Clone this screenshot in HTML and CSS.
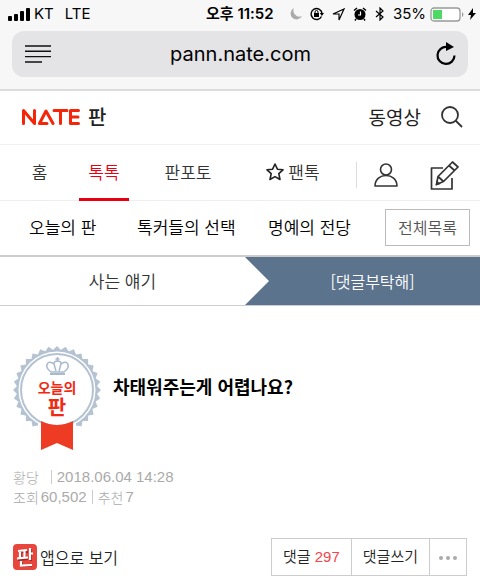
FILE: index.html
```html
<!DOCTYPE html>
<html lang="ko">
<head>
    <meta charset="UTF-8">
    <meta name="viewport" content="width=device-width, initial-scale=1">
    <title>네이트 판</title>
    <link rel="stylesheet" href="styles.css">
</head>
<body>
    <div class="browser">
        <div class="status">
            <div class="carrier">
                <svg width="22" height="13" viewBox="0 0 22 13"><rect x="0" y="8" width="4" height="5" rx="1"/><rect x="6" y="6" width="4" height="7" rx="1"/><rect x="12" y="3" width="4" height="10" rx="1"/><rect x="18" y="0" width="4" height="13" rx="1"/></svg>
                <span>KT</span>
                <span class="lte">LTE</span>
            </div>
            <div class="clock">오후 11:52</div>
            <div class="indicators">
                <svg width="12" height="12" viewBox="0 0 12 12"><path fill="#aaa" d="M4 0A6 6 0 1 0 12 8A6 6 0 0 1 4 0Z"/></svg>
                <svg width="14" height="14" viewBox="0 0 14 14"><path d="M11.5 9.5A5.5 5.5 0 1 1 12 6" fill="none" stroke="#000" stroke-width="1.4"/><path d="M9.8 6h4.2l-2.1 3zM4 6h5v4H4z"/><path d="M5 6V5a1.5 1.5 0 0 1 3 0v1" fill="none" stroke="#000"/></svg>
                <svg width="13" height="13" viewBox="0 0 13 13"><path d="M1 6L12 1L7 12V6Z" fill="none" stroke="#000" stroke-width="1.2"/></svg>
                <svg width="14" height="14" viewBox="0 0 14 14"><circle cx="7" cy="7.5" r="5.5"/><path d="M1 3.5L4 1M13 3.5L10 1M3 12l-1 1.5M11 12l1 1.5" stroke="#000" stroke-width="1.5"/><path d="M7.500 4.500v3.500H5" fill="none" stroke="#fff" stroke-width="1.200"/></svg>
                <svg width="10" height="14" viewBox="0 0 10 14"><path d="M1 4l7 6-3 3V1l3 3-7 6" fill="none" stroke="#000" stroke-width="1.2"/></svg>
                <span>35%</span>
                <svg class="battery" width="34" height="15" viewBox="0 0 34 15"><rect x="1" y="1" width="29" height="13" rx="3" fill="#fff" stroke="#999" stroke-width="1.3"/><rect x="3" y="3" width="9" height="9" fill="#4cd964"/><path d="M32 5a3 3 0 0 1 0 5z" fill="#999"/></svg>
                <svg width="8" height="12" viewBox="0 0 8 12"><path d="M5 0L0 7h3L2 12l6-7H5z"/></svg>
            </div>
        </div>
        <div class="address">
            <button class="icon-btn" aria-label="읽기 도구">
                <svg width="26" height="18" viewBox="0 0 26 18"><path d="M0 1h26M0 6.300h26M0 11.600h26M0 17h17" stroke="#111" stroke-width="1.4"/></svg>
            </button>
            <span class="host">pann.nate.com</span>
            <button class="icon-btn" aria-label="새로고침">
                <svg width="20" height="24" viewBox="0 0 20 24"><path d="M11 5A8.500 8.500 0 1 0 18.500 13.500" fill="none" stroke="#000" stroke-width="2.200"/><path d="M10 0v9l8-4z"/></svg>
            </button>
        </div>
    </div>

    <header class="top">
        <a href="#" class="logo" aria-label="NATE 판">
            <svg width="58" height="16" viewBox="0 0 58 16"><g fill="none" stroke="#f5250a" stroke-width="3" stroke-linecap="round" stroke-linejoin="round"><path d="M1.500 14.500V1.500L12.500 14.500V1.500"/><path d="M31 14.500L24 2L17.500 14.500H25"/><path d="M32 1.500H45M38.500 1.500V14.500"/><path d="M56.500 1.500H48.500V14.500H56.500M48.500 8H56"/></g></svg>
            <span>판</span>
        </a>
        <a href="#" class="video">동영상</a>
        <button class="icon-btn" aria-label="검색">
            <svg width="22" height="22" viewBox="0 0 22 22"><g fill="none" stroke="#333" stroke-width="1.800"><circle cx="9" cy="9" r="8"/><path d="M14.500 14.500L21 21"/></g></svg>
        </button>
    </header>

    <nav class="tabs">
        <a href="#">홈</a>
        <a href="#" class="on">톡톡</a>
        <a href="#">판포토</a>
        <a href="#">
            <svg width="18" height="18" viewBox="0 0 18 18"><path d="M9 1l2.400 5.200 5.600.6-4.200 3.800 1.200 5.900L9 13.600l-5 2.900 1.200-5.900L1 6.800l5.600-.6z" fill="none" stroke="#222" stroke-width="1.600" stroke-linejoin="round"/></svg>
            팬톡
        </a>
        <div class="tools">
            <button class="icon-btn" aria-label="내 정보">
                <svg width="24" height="24" viewBox="0 0 24 24"><g fill="none" stroke="#333" stroke-width="1.600" stroke-linejoin="round"><circle cx="12" cy="6.500" r="5.500"/><path d="M1 23c0-14 22-14 22 0z"/></g></svg>
            </button>
            <button class="icon-btn" aria-label="글쓰기">
                <svg width="29" height="29" viewBox="0 0 29 29"><g fill="none" stroke="#333" stroke-width="1.700" stroke-linejoin="round"><path d="M13 7H1.500V28H22V17"/><path d="M6.500 23.500L8 15.500L22.500 1L28 6L13.500 20.500ZM8 15.500L13.500 20.500M19 4.500l5.500 5"/></g><path d="M5.500 24.500l1.200-5 4 3.500z" fill="#333"/></svg>
            </button>
        </div>
    </nav>

    <nav class="sub">
        <a href="#">오늘의 판</a>
        <a href="#">톡커들의 선택</a>
        <a href="#">명예의 전당</a>
        <button class="all">전체목록</button>
    </nav>

    <div class="path">
        <a href="#">사는 얘기</a>
        <a href="#" class="channel">[댓글부탁해]</a>
    </div>

    <article>
        <div class="headline">
            <svg class="medal" width="88" height="105" viewBox="0 0 88 105">
                <defs><path id="teeth" d="M44 0L88 44L44 88L0 44Z"/></defs>
                <g fill="#b4c2d2">
                    <use href="#teeth"/>
                    <use href="#teeth" transform="rotate(11.250 44 44)"/>
                    <use href="#teeth" transform="rotate(22.500 44 44)"/>
                    <use href="#teeth" transform="rotate(33.750 44 44)"/>
                    <use href="#teeth" transform="rotate(45 44 44)"/>
                    <use href="#teeth" transform="rotate(56.250 44 44)"/>
                    <use href="#teeth" transform="rotate(67.500 44 44)"/>
                    <use href="#teeth" transform="rotate(78.750 44 44)"/>
                </g>
                <circle cx="44" cy="44" r="38.500" fill="#fff"/>
                <path d="M25 77h38v12H25z" fill="#fff"/>
                <circle cx="44" cy="44" r="36" fill="#fff" stroke="#b4c2d2" stroke-width="2"/>
                <path d="M28 75Q44 83 60 75V104L44 97L28 104Z" fill="#ee3b24"/>
                <g fill="none" stroke="#a9bacd" stroke-width="1.500" stroke-linejoin="round"><path d="M38 26C30 20 35 13 41 18C41 14 48 14 48 18C54 13 59 20 51 26Z"/><path d="M41 18L43 25M48 18L46 25M44.500 11v5M42.500 13h4"/><path d="M37 28h15" stroke-width="2"/></g>
                <text x="44" y="47" font-size="14">오늘의</text>
                <text x="44" y="69" font-size="20">판</text>
            </svg>
            <h1>차태워주는게 어렵나요?</h1>
        </div>
        <div class="meta">
            <div>황당 <i></i> <span>2018.06.04 14:28</span></div>
            <div>조회 <span class="count">60,502</span> <i class="tight"></i> 추천 <span class="count">7</span></div>
        </div>
        <div class="actions">
            <a href="#" class="app">
                <svg width="24" height="26" viewBox="0 0 24 26"><rect width="24" height="26" rx="4" fill="#e8463c"/><g fill="none" stroke="#9b2a24" stroke-width="2" transform="translate(1 1)"><path d="M5 7h9M4 15l10-1M7 7v7M11 7v7M17 4v12M8 17v4h10"/></g><g fill="none" stroke="#fff" stroke-width="2.200"><path d="M5 7l9-1M4 14.500l11-1M7 7v7M11.500 6v8M17 4v12M17 9.500h3M8 17v4.500l11-.5"/></g></svg>
                앱으로 보기
            </a>
            <div class="buttons">
                <button>댓글 <span>297</span></button>
                <button>댓글쓰기</button>
                <button class="more" aria-label="더보기"><svg width="18" height="4" viewBox="0 0 18 4"><g fill="#aaa"><circle cx="2" cy="2" r="2"/><circle cx="9" cy="2" r="2"/><circle cx="16" cy="2" r="2"/></g></svg></button>
            </div>
        </div>
    </article>
</body>
</html>
```
FILE: styles.css
```css
*{
    box-sizing: border-box;
}
body{
    margin: 0;
    background: #fff;
    color: #222;
    font-family: "Noto Sans CJK KR", sans-serif;
    font-size: 17px;
    font-weight: 350;
    line-height: 24px;
}
a{
    color: inherit;
    text-decoration: none;
}
button{
    font: inherit;
    color: inherit;
    background: none;
    border: 0;
    padding: 0;
}
svg{
    display: block;
    flex: none;
}
.icon-btn{
    display: block;
}

/* browser bar */
.browser{
    height: 91px;
    padding: 2px 4px 0 8px;
    background: #f7f7f7;
    border-bottom: 2px solid #dcdcdc;
    color: #000;
    font-family: Inter, "Noto Sans CJK KR", sans-serif;
    font-size: 15px;
    font-weight: 400;
}
.status{
    display: flex;
    justify-content: space-between;
    align-items: center;
    height: 24px;
}
.carrier{
    display: flex;
    align-items: center;
    gap: 4px;
    width: 198px;
}
.lte{
    margin-left: 7px;
}
.clock{
    font-weight: 600;
    white-space: nowrap;
}
.indicators{
    display: flex;
    align-items: center;
    justify-content: flex-end;
    gap: 8px;
    margin-left: auto;
}
.battery{
    margin: 0 -4px;
}
.address{
    display: grid;
    grid-template-columns: 1fr auto 1fr;
    align-items: center;
    height: 46px;
    margin: 5px 8px 0 4px;
    padding: 0 12px 0 13px;
    background: #e4e4e6;
    border-radius: 12px;
}
.address .icon-btn:last-child{
    justify-self: end;
}
.host{
    font-size: 20px;
}

/* site header */
.top{
    display: flex;
    align-items: center;
    height: 54px;
    padding: 0 17px 2px 22px;
    border-bottom: 1px solid #f0f0f0;
}
.logo{
    display: flex;
    align-items: center;
    gap: 8px;
    font-size: 20px;
    font-weight: 500;
}
.video{
    margin: 0 20px 0 auto;
    font-size: 19px;
    font-weight: 400;
}
.tabs{
    display: grid;
    grid-template-columns: 79fr 50fr 118fr 92fr 141fr;
    height: 56px;
    border-bottom: 1px solid #eee;
    color: #333;
}
.tabs a{
    display: flex;
    align-items: center;
    justify-content: center;
    gap: 4px;
    padding-bottom: 2px;
}
.tabs .on{
    color: #e60012;
    border-bottom: 3px solid #e60012;
    margin-bottom: -1px;
    padding: 1px 0 0;
}
.tools{
    display: flex;
    align-items: center;
    justify-content: space-between;
    height: 26px;
    margin: 17px 21px 0 17px;
    padding-left: 17px;
    border-left: 1px solid #ddd;
}
.sub{
    display: grid;
    grid-template-columns: 108fr 131fr 117fr 85px;
    align-items: center;
    height: 56px;
    padding: 0 10px 2px 29px;
    border-bottom: 2px solid #ccc;
    color: #000;
    white-space: nowrap;
}
.all{
    height: 37px;
    border: 1px solid #bbb;
    color: #555;
    font-size: 16px;
}
.path{
    display: grid;
    grid-template-columns: 245fr 235fr;
    height: 49px;
    border-bottom: 1px solid #ccced6;
    color: #333;
}
.path a{
    display: flex;
    align-items: center;
    justify-content: center;
}
.path .channel{
    background: #5c738e;
    color: #fff;
    font-size: 16px;
    padding-left: 20px;
    clip-path: polygon(0 0, 100% 0, 100% 100%, 0 100%, 24px 50%);
}

/* post */
article{
    padding: 40px 13px 0;
}
.headline{
    display: flex;
    gap: 12px;
}
.medal text{
    fill: #f02a12;
    font-weight: 700;
    text-anchor: middle;
}
h1{
    margin: 28px 0 0;
    color: #000;
    font-size: 18px;
    line-height: 24px;
    font-weight: 700;
}
.meta{
    margin-top: 16px;
    color: #aaa;
    font-size: 14px;
    font-weight: 300;
    line-height: 20px;
}
.meta div{
    display: flex;
    align-items: center;
}
.meta span{
    font-family: "Liberation Sans", sans-serif;
    font-size: 15px;
}
.meta .count{
    margin-left: 2px;
}
.meta i{
    height: 14px;
    margin: 0 5px 0 12px;
    border-left: 1px solid #ccc;
}
.meta .tight{
    margin: 0 5px;
}
.actions{
    display: flex;
    justify-content: space-between;
    margin-top: 31px;
}
.app{
    display: flex;
    align-items: center;
    gap: 3px;
    font-size: 16px;
}
.buttons{
    display: flex;
    height: 38px;
    border: 1px solid #ccc;
    font-size: 15px;
}
.buttons button{
    padding: 0 11px 2px;
}
.buttons button + button{
    border-left: 1px solid #ccc;
}
.buttons span{
    color: #f5454a;
    font-family: "Liberation Sans", sans-serif;
}
.buttons .more{
    padding: 2px 9px 0;
}
```
